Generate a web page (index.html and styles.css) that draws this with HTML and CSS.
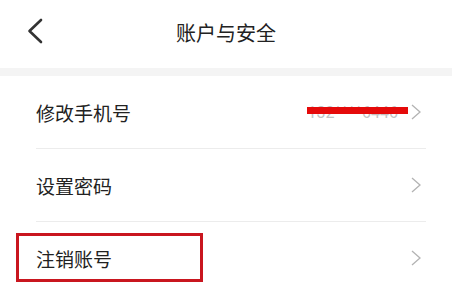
FILE: index.html
```html
<!DOCTYPE html>
<html lang="zh-CN">
<head>
<meta charset="utf-8">
<link rel="stylesheet" href="styles.css">
</head>
<body>
<div class="page">
  <header class="header">
    <span class="back">
      <svg width="16" height="26" viewBox="0 0 16 26"><polyline points="14,2 2.5,13 14,24" fill="none" stroke="#333" stroke-width="2.6" stroke-linecap="round" stroke-linejoin="round"/></svg>
    </span>
    <h1 class="title">账户与安全</h1>
  </header>
  <div class="band"></div>
  <ul class="list">
    <li class="item">
      <span class="label">修改手机号</span>
      <span class="right">
        <span class="value">132****6446</span>
        <span class="mask"></span>
        <svg class="chev" width="10" height="16" viewBox="0 0 10 16"><polyline points="1,1 9,8 1,15" fill="none" stroke="#b3b3b3" stroke-width="1.3"/></svg>
      </span>
    </li>
    <li class="item">
      <span class="label">设置密码</span>
      <span class="right">
        <svg class="chev" width="10" height="16" viewBox="0 0 10 16"><polyline points="1,1 9,8 1,15" fill="none" stroke="#b3b3b3" stroke-width="1.3"/></svg>
      </span>
    </li>
    <li class="item last">
      <span class="label">注销账号</span>
      <span class="right">
        <svg class="chev" width="10" height="16" viewBox="0 0 10 16"><polyline points="1,1 9,8 1,15" fill="none" stroke="#b3b3b3" stroke-width="1.3"/></svg>
      </span>
      <span class="highlight"></span>
    </li>
  </ul>
</div>
</body>
</html>
```

FILE: styles.css
```css
html, body {
  margin: 0;
  padding: 0;
  background: #fff;
}
.page {
  width: 452px;
  height: 295px;
  overflow: hidden;
  font-family: "Noto Sans CJK SC", "Noto Sans", sans-serif;
  color: #222;
}
.header {
  position: relative;
  height: 68px;
  display: flex;
  align-items: center;
  justify-content: center;
}
.back {
  position: absolute;
  left: 27px;
  top: 18px;
  display: flex;
}
.title {
  margin: 0;
  font-size: 20px;
  font-weight: 400;
  line-height: 1;
  margin-top: -2px;
}
.band {
  height: 8px;
  background: #f4f4f4;
}
.list {
  list-style: none;
  margin: 0 26px 0 36px;
  padding: 0;
}
.item {
  position: relative;
  height: 72px;
  border-bottom: 1px solid #ececec;
  display: flex;
  align-items: center;
  justify-content: space-between;
  padding-right: 5px;
}
.item.last {
  border-bottom: none;
}
.label {
  font-size: 19px;
  line-height: 1;
}
.right {
  position: relative;
  display: flex;
  align-items: center;
  gap: 13px;
}
.value {
  font-family: "Roboto", "Noto Sans", sans-serif;
  font-size: 16px;
  color: #c2c2c2;
  line-height: 16px;
  margin-top: 2px;
}
.mask {
  position: absolute;
  left: 0;
  right: 13px;
  top: 4px;
  height: 7px;
  background: #e50a0a;
}
.chev {
  display: block;
}
.highlight {
  position: absolute;
  left: -20px;
  top: 11px;
  width: 181px;
  height: 43px;
  border: 3px solid #c9161f;
}
```
